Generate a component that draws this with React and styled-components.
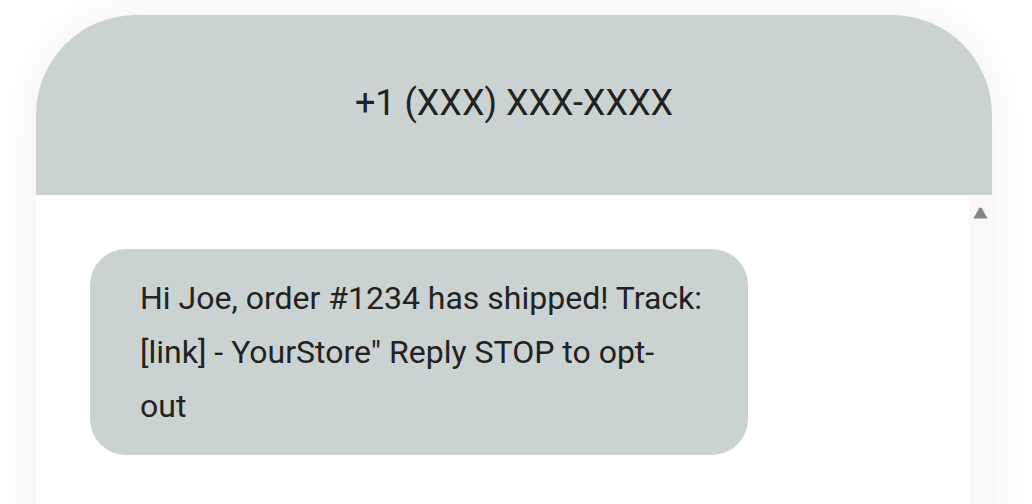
import React from "react";
import styled, { createGlobalStyle } from "styled-components";

const GlobalStyle = createGlobalStyle`
  html, body {
    margin: 0;
    padding: 0;
    background: #ffffff;
    overflow: hidden;
  }
  body {
    font-family: Roboto, "Liberation Sans", sans-serif;
  }
`;

const Page = styled.div`
  padding: 15px 40px 0 36px;
  height: 504px;
  box-sizing: border-box;
  overflow: hidden;
`;

const Phone = styled.div`
  width: 956px;
  border-radius: 100px 100px 0 0;
  overflow: hidden;
  background: #ffffff;
  box-shadow: 0 0 40px rgba(0, 0, 0, 0.06);
  display: flex;
  flex-direction: column;
`;

const Header = styled.header`
  height: 180px;
  background: #cad3d2;
  display: flex;
  align-items: center;
  justify-content: center;
  font-size: 36px;
  color: #222222;
  padding-bottom: 4px;
  box-sizing: border-box;
`;

const Thread = styled.div`
  height: 420px;
  display: flex;
  background: #ffffff;
`;

const Messages = styled.div`
  flex: 1;
  padding: 54px 0 0 54px;
  box-sizing: border-box;
`;

const ScrollTrack = styled.div`
  width: 23px;
  background: #f9f9f9;
  display: flex;
  justify-content: center;
  padding-top: 12px;
  box-sizing: border-box;
`;

const ArrowUp = styled.svg`
  width: 15px;
  height: 12px;
  display: block;
  margin-left: -1px;
`;

const Bubble = styled.div`
  width: 658px;
  box-sizing: border-box;
  padding: 22px 46px 22px 50px;
  background: #cad3d2;
  border-radius: 36px;
  font-size: 32px;
  line-height: 54px;
  color: #222222;
`;

export default function App() {
  return (
    <>
      <GlobalStyle />
      <Page>
        <Phone>
          <Header>+1 (XXX) XXX-XXXX</Header>
          <Thread>
            <Messages>
              <Bubble>
                Hi Joe, order #1234 has shipped! Track: [link] - YourStore" Reply STOP to opt-
                <br />
                out
              </Bubble>
            </Messages>
            <ScrollTrack>
              <ArrowUp viewBox="0 0 15 12">
                <path d="M6.2 1.2 Q7.5 -0.2 8.8 1.2 L14.6 11.4 L0.4 11.4 Z" fill="#858585" />
              </ArrowUp>
            </ScrollTrack>
          </Thread>
        </Phone>
      </Page>
    </>
  );
}
